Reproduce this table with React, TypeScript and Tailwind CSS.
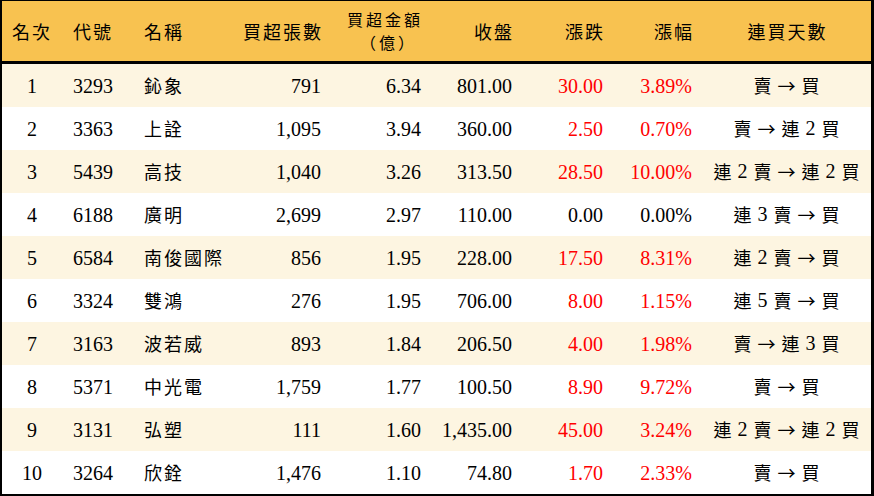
import React from "react";

type Row = {
  rank: string;
  code: string;
  name: string;
  qty: string;
  amt: string;
  close: string;
  chg: string;
  pct: string;
  streak: string;
  red: boolean;
};

const rows: Row[] = [
  { rank: "1", code: "3293", name: "鈊象", qty: "791", amt: "6.34", close: "801.00", chg: "30.00", pct: "3.89%", streak: "賣 → 買", red: true },
  { rank: "2", code: "3363", name: "上詮", qty: "1,095", amt: "3.94", close: "360.00", chg: "2.50", pct: "0.70%", streak: "賣 → 連 2 買", red: true },
  { rank: "3", code: "5439", name: "高技", qty: "1,040", amt: "3.26", close: "313.50", chg: "28.50", pct: "10.00%", streak: "連 2 賣 → 連 2 買", red: true },
  { rank: "4", code: "6188", name: "廣明", qty: "2,699", amt: "2.97", close: "110.00", chg: "0.00", pct: "0.00%", streak: "連 3 賣 → 買", red: false },
  { rank: "5", code: "6584", name: "南俊國際", qty: "856", amt: "1.95", close: "228.00", chg: "17.50", pct: "8.31%", streak: "連 2 賣 → 買", red: true },
  { rank: "6", code: "3324", name: "雙鴻", qty: "276", amt: "1.95", close: "706.00", chg: "8.00", pct: "1.15%", streak: "連 5 賣 → 買", red: true },
  { rank: "7", code: "3163", name: "波若威", qty: "893", amt: "1.84", close: "206.50", chg: "4.00", pct: "1.98%", streak: "賣 → 連 3 買", red: true },
  { rank: "8", code: "5371", name: "中光電", qty: "1,759", amt: "1.77", close: "100.50", chg: "8.90", pct: "9.72%", streak: "賣 → 買", red: true },
  { rank: "9", code: "3131", name: "弘塑", qty: "111", amt: "1.60", close: "1,435.00", chg: "45.00", pct: "3.24%", streak: "連 2 賣 → 連 2 買", red: true },
  { rank: "10", code: "3264", name: "欣銓", qty: "1,476", amt: "1.10", close: "74.80", chg: "1.70", pct: "2.33%", streak: "賣 → 買", red: true },
];

const cols = "grid grid-cols-[60px_71px_100px_98px_100px_90px_92px_89px_169px]";
const font = { fontFamily: "'Liberation Serif', 'Noto Sans CJK TC', serif" };

function Streak({ text }: { text: string }) {
  const parts = text.split(" ");
  return (
    <span className="inline-flex items-center gap-[6px]">
      {parts.map((p, i) =>
        /^[0-9]$/.test(p) ? (
          <span key={i} className="text-[20px]">{p}</span>
        ) : (
          <span key={i} className="text-[18px] [font-family:'Noto_Sans_CJK_TC',sans-serif]">{p}</span>
        )
      )}
    </span>
  );
}

export default function App() {
  const cjk = "text-[18px] tracking-[2px] [font-family:'Noto_Sans_CJK_TC',sans-serif]";
  return (
    <div className="w-[874px] h-[496px] bg-white border-black border-t-[1px] border-l-[2px] border-r-[3px] border-b-[2px] text-black" style={font}>
      <div className={`${cols} h-[60px] bg-[#f8c250] border-b-[3px] border-black items-center box-content`}>
        <div className={`${cjk} text-center`}>名次</div>
        <div className={`${cjk} pl-[11px]`}>代號</div>
        <div className={`${cjk} pl-[11px]`}>名稱</div>
        <div className={`${cjk} text-right pr-[8px]`}>買超張數</div>
        <div className="flex flex-col items-end pr-[8px] text-[16px] tracking-[3px] leading-[23px] [font-family:'Noto_Sans_CJK_TC',sans-serif]">
          <span className="block h-[23px]">買超金額</span>
          <span className="block h-[23px] pr-[6px]">（億）</span>
        </div>
        <div className={`${cjk} text-right pr-[7px]`}>收盤</div>
        <div className={`${cjk} text-right pr-[8px]`}>漲跌</div>
        <div className={`${cjk} text-right pr-[8px]`}>漲幅</div>
        <div className={`${cjk} text-center pl-[2px]`}>連買天數</div>
      </div>
      {rows.map((r, i) => (
        <div key={r.rank} className={`${cols} h-[43px] items-center text-[20px] ${i % 2 === 0 ? "bg-[#fdf5e1]" : "bg-white"}`}>
          <div className="text-center">{r.rank}</div>
          <div className="pl-[11px]">{r.code}</div>
          <div className={`${cjk} pl-[11px]`}>{r.name}</div>
          <div className="text-right pr-[10px]">{r.qty}</div>
          <div className="text-right pr-[10px]">{r.amt}</div>
          <div className="text-right pr-[9px]">{r.close}</div>
          <div className={`text-right pr-[10px] ${r.red ? "text-[#ff0000]" : ""}`}>{r.chg}</div>
          <div className={`text-right pr-[10px] ${r.red ? "text-[#ff0000]" : ""}`}>{r.pct}</div>
          <div className="text-center">
            <Streak text={r.streak} />
          </div>
        </div>
      ))}
    </div>
  );
}
